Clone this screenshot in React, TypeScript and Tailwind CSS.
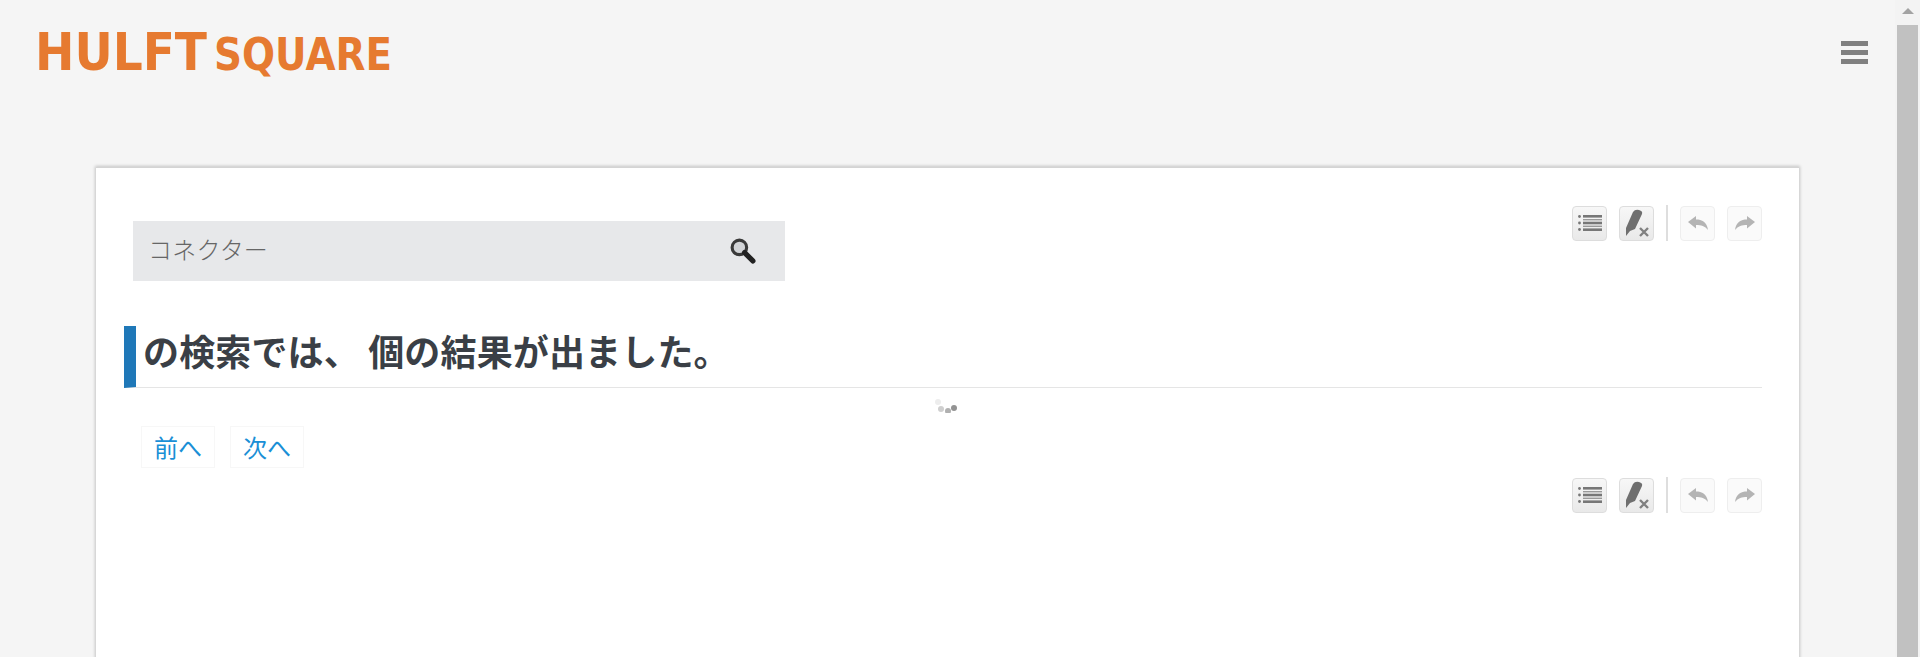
const jp = "font-['Noto_Sans_CJK_JP','Liberation_Sans',sans-serif]"

const Logo = () => (
  <svg width="420" height="64" viewBox="0 0 420 64" className="block">
    <text x="-1" y="50" fontFamily="DejaVu Sans" fontWeight="700" fontSize="52" fill="#e67a30" textLength="172" lengthAdjust="spacingAndGlyphs">HULFT</text>
    <text x="178" y="50" fontFamily="DejaVu Sans" fontWeight="700" fontSize="44" fill="#e67a30" textLength="178" lengthAdjust="spacingAndGlyphs">SQUARE</text>
  </svg>
)

const ListIcon = () => (
  <svg width="24" height="18" viewBox="0 0 24 18" fill="#777">
    <circle cx="1.5" cy="2.5" r="1.4" />
    <circle cx="1.5" cy="9" r="1.4" />
    <circle cx="1.5" cy="15.5" r="1.4" />
    <rect x="5" y="1" width="19" height="2.6" />
    <rect x="5" y="5" width="19" height="1.4" fill="#999" />
    <rect x="5" y="7.7" width="19" height="2.6" />
    <rect x="5" y="11.6" width="19" height="1.4" fill="#999" />
    <rect x="5" y="14.4" width="19" height="2.6" />
  </svg>
)

const PenClearIcon = () => (
  <svg width="28" height="28" viewBox="0 0 28 28" fill="none">
    <path d="M3 27 L3 19 L10 3 Q12 0 16 1 Q20 2 19 5 L12 20 L7 22 Z" fill="#6f6f6f" />
    <path d="M17 19 L25 27 M25 19 L17 27" stroke="#808080" strokeWidth="2.4" />
  </svg>
)

const UndoIcon = ({ flip }: { flip?: boolean }) => (
  <svg width="20" height="15" viewBox="0 0 20 15" fill="#b4b4b4" className={flip ? "-scale-x-100" : ""}>
    <path d="M0 6 L8 0 V3.5 C14 3.5 19 6 20 14 C17 10 13 9 8 9 V12.5 Z" />
  </svg>
)

const ToolButton = ({ off, children }: { off?: boolean; children: React.ReactNode }) => (
  <div className={`flex h-[35px] w-[35px] items-center justify-center rounded-[4px] border ${off ? "border-[#eeeeee] bg-[#fafafa]" : "border-[#dddddd] bg-gradient-to-b from-[#f7f7f7] to-[#e9e9e9]"}`}>
    {children}
  </div>
)

const Toolbar = () => (
  <div className="flex items-center">
    <ToolButton><ListIcon /></ToolButton>
    <div className="ml-3"><ToolButton><PenClearIcon /></ToolButton></div>
    <div className="mx-3 h-[36px] w-[2px] bg-[#dedede]" />
    <ToolButton off><UndoIcon /></ToolButton>
    <div className="ml-3"><ToolButton off><UndoIcon flip /></ToolButton></div>
  </div>
)

const Spinner = () => (
  <svg width="22" height="14" viewBox="0 0 22 14">
    <circle cx="3" cy="3" r="3" fill="#ededed" />
    <circle cx="6" cy="10" r="3" fill="#cfcfcf" />
    <circle cx="13" cy="12" r="3" fill="#b0b0b0" />
    <circle cx="19" cy="9" r="3" fill="#939393" />
  </svg>
)

const PageButton = ({ label }: { label: string }) => (
  <div className="flex h-[42px] w-[74px] items-center justify-center border border-[#f7f7f7] text-[24px] text-[#1a8fd6]">{label}</div>
)

const Scrollbar = () => (
  <div className="flex h-full w-[25px] shrink-0 flex-col items-center bg-[#f3f3f3]">
    <div className="flex h-[25px] w-full items-center justify-center pb-[3px]">
      <div className="h-0 w-0 border-x-[6px] border-b-[6px] border-x-transparent border-b-[#a3a3a3]" />
    </div>
    <div className="w-[21px] flex-1 bg-[#c1c1c1]" />
  </div>
)

export default function App() {
  return (
    <div className={`flex h-screen overflow-hidden bg-[#f5f5f5] ${jp}`}>
      <div className="min-w-0 flex-1">
        <header className="flex h-[167px] items-start justify-between pl-[36px] pr-[27px] pt-[20px]">
          <Logo />
          <div className="mt-[21px] flex w-[27px] flex-col gap-[4px]">
            <div className="h-[5px] bg-[#808080]" />
            <div className="h-[5px] bg-[#808080]" />
            <div className="h-[5px] bg-[#808080]" />
          </div>
        </header>
        <main className="ml-[96px] w-[1703px] border-t border-[#d4d4d4] bg-white pb-[200px] pl-[28px] pr-[37px] pt-[37px] shadow-[0_0_3px_1px_rgba(0,0,0,0.2)]">
          <div className="flex items-start justify-between">
            <div className="ml-[9px] mt-[16px] flex h-[60px] w-[652px] items-center justify-between bg-[#e7e8ea] pl-[15px] pr-[29px]">
              <span className="-mt-[4px] text-[24px] font-light tracking-[0.2px] text-[#666666]">コネクター</span>
              <svg width="27" height="27" viewBox="0 0 26 26" fill="none" className="-mt-[2px]">
                <circle cx="10" cy="10" r="7" stroke="#3a3a3a" strokeWidth="3" fill="#d2d4d7" />
                <path d="M15 15 L23 23" stroke="#222" strokeWidth="5" strokeLinecap="round" />
              </svg>
            </div>
            <Toolbar />
          </div>
          <div className="mt-[45px] flex h-[62px] items-center border-b border-[#e5e5e5] border-l-[12px] border-l-[#1f78b8] pb-[13px] pl-[7px]">
            <h1 className="text-[36px] font-bold tracking-[0.15px] text-[#3a3f46]">の検索では、 個の結果が出ました。</h1>
          </div>
          <div className="mt-[11px] flex justify-center pl-[6px]"><Spinner /></div>
          <div className="mt-[13px] flex gap-[15px] pl-[17px]">
            <PageButton label="前へ" />
            <PageButton label="次へ" />
          </div>
          <div className="mt-[9px] flex justify-end"><Toolbar /></div>
        </main>
      </div>
      <Scrollbar />
    </div>
  )
}
